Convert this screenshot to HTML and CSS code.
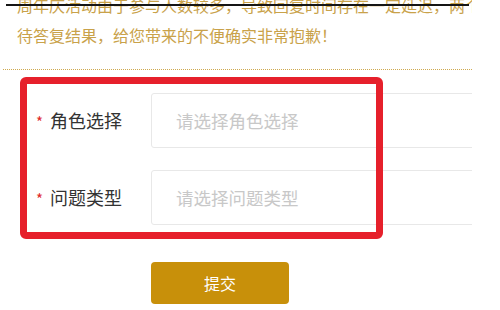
FILE: index.html
```html
<!DOCTYPE html>
<html lang="zh-CN">
<head>
<meta charset="utf-8">
<title>反馈</title>
<link rel="stylesheet" href="styles.css">
</head>
<body>
<div class="page">
  <div class="notice">
    <p class="line">周年庆活动由于参与人数较多，导致回复时间存在一定延迟，两个工作日内请耐心等</p>
    <p class="line">待答复结果，给您带来的不便确实非常抱歉！</p>
  </div>
  <div class="divider"></div>
  <form class="form">
    <div class="row">
      <label class="label"><span class="star">*</span>角色选择</label>
      <div class="input">请选择角色选择</div>
    </div>
    <div class="row">
      <label class="label"><span class="star">*</span>问题类型</label>
      <div class="input">请选择问题类型</div>
    </div>
    <div class="actions">
      <button type="button" class="submit">提交</button>
    </div>
  </form>
  <div class="topline"></div>
  <div class="highlight"></div>
</div>
</body>
</html>
```

FILE: styles.css
```css
html, body {
  margin: 0;
  padding: 0;
  background: #ffffff;
}

.page {
  position: relative;
  width: 472px;
  height: 310px;
  overflow: hidden;
  font-family: "Noto Sans CJK SC", "Noto Sans", sans-serif;
}

.notice {
  margin-top: -10px;
  padding-left: 17px;
}

.line {
  margin: 0;
  font-size: 16px;
  line-height: 30px;
  color: #c9a24a;
  white-space: nowrap;
}

.divider {
  margin: 19px 0 0 3px;
  border-top: 1px dotted #cfa94e;
}

.form {
  margin-top: 23px;
  display: flex;
  flex-direction: column;
  gap: 22px;
}

.row {
  display: flex;
  align-items: center;
}

.label {
  width: 115px;
  padding-left: 36px;
  display: flex;
  align-items: center;
  font-size: 18px;
  color: #333333;
  position: relative;
  top: -1px;
}

.star {
  color: #e02a2a;
  font-size: 15px;
  margin-right: 7px;
  position: relative;
  top: 2px;
}

.input {
  flex: 1;
  margin-right: -30px;
  height: 55px;
  box-sizing: border-box;
  border: 1px solid #e8e8e8;
  border-radius: 3px;
  padding-left: 24px;
  display: flex;
  align-items: center;
  font-size: 17.5px;
  color: #c8c8c8;
}

.actions {
  margin-top: 15px;
  padding-left: 151px;
}

.submit {
  width: 138px;
  height: 42px;
  border: none;
  border-radius: 4px;
  background: #c8900a;
  color: #ffffff;
  font-family: "Noto Sans CJK SC", "Noto Sans", sans-serif;
  font-size: 16px;
  padding: 0;
}

.topline {
  position: absolute;
  top: 4px;
  left: 6px;
  width: 463px;
  height: 2px;
  background: #151515;
}

.highlight {
  position: absolute;
  left: 20px;
  top: 77px;
  width: 363px;
  height: 162px;
  box-sizing: border-box;
  border: 7px solid #e6202b;
  border-radius: 6px;
}
```
